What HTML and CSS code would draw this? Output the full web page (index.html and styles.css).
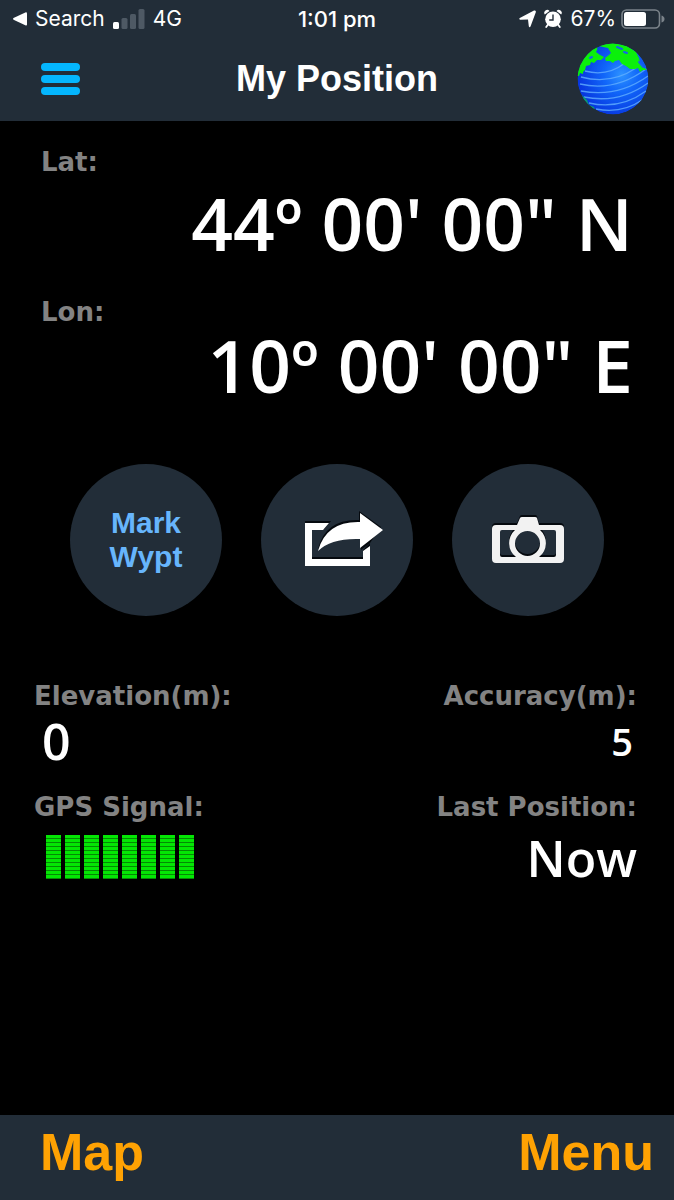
FILE: index.html
```
<!DOCTYPE html>
<html lang="en">
  <head>
    <meta charset="UTF-8">
    <meta name="viewport" content="width=device-width, initial-scale=1">
    <title>My Position</title>
    <link rel="stylesheet" href="styles.css">
  </head>
  <body>

    <header class="top">
      <div class="status">
        <div class="status-left">
          <svg width="14" height="14" viewBox="0 0 14 14" fill="#fff"><path d="M0.5 6.1 12.3 0.4Q14 0 14 1.4V12.4Q14 13.8 12.3 13.2L0.5 7.7Q-0.5 6.9 0.5 6.1Z"/></svg>
          <a href="#" class="back">Search</a>
          <svg width="32" height="20" viewBox="0 0 32 20" fill="#4e5964">
            <rect x="0" y="13" width="6" height="7" rx="1.5" fill="#fff"/>
            <rect x="8.5" y="9" width="6" height="11" rx="1.5"/>
            <rect x="17" y="5" width="6" height="15" rx="1.5"/>
            <rect x="25.5" y="0" width="6" height="20" rx="1.5"/>
          </svg>
          <span>4G</span>
        </div>
        <span class="time">1:01 pm</span>
        <div class="status-right">
          <svg width="17" height="18" viewBox="0 0 17 18" fill="#fff"><path d="M0.8 8 15 0.6Q17.4 0 16.8 2.2L11.6 16.2Q10.6 18.4 9.8 16.2L9 9.6 1.2 9.8Q-0.8 9 0.8 8Z"/></svg>
          <svg width="18" height="18" viewBox="0 0 18 18">
            <path d="M0.8 4.6A3 3 0 0 1 5.5 0.9ZM17.2 4.6A3 3 0 0 0 12.5 0.9Z" fill="#fff"/>
            <path d="M4 14.5 2.2 17M14 14.5l1.8 2.5" stroke="#fff" stroke-width="1.8" stroke-linecap="round"/>
            <circle cx="9" cy="9.2" r="7.8" fill="#fff"/>
            <path d="M9 4.5V10H5.2" fill="none" stroke="#222d38" stroke-width="1.4"/>
          </svg>
          <div class="battery">
            <span>67%</span>
            <svg width="44" height="20" viewBox="0 0 44 20">
              <rect x="1" y="1" width="37.5" height="18" rx="4.5" fill="none" stroke="#7b838a" stroke-width="1.6"/>
              <rect x="3" y="3" width="22" height="14" rx="2.5" fill="#fff"/>
              <path d="M40.5 6.5Q43.5 7.5 43.5 10T40.5 13.5Z" fill="#7b838a"/>
            </svg>
          </div>
        </div>
      </div>

      <div class="title-bar">
        <button class="icon-button" aria-label="Open menu">
          <svg width="39" height="32" viewBox="0 0 39 32" fill="#04b6fe">
            <rect width="39" height="8" rx="4"/>
            <rect y="12" width="39" height="8" rx="4"/>
            <rect y="24" width="39" height="8" rx="4"/>
          </svg>
        </button>
        <h1>My Position</h1>
        <button class="icon-button globe" aria-label="World map">
          <svg width="72" height="72" viewBox="0 0 72 72">
            <defs>
              <radialGradient id="sea" cx="0.62" cy="0.44" r="0.6">
                <stop offset="0" stop-color="#2e93ff"/>
                <stop offset="0.4" stop-color="#1268fa"/>
                <stop offset="1" stop-color="#0838e0"/>
              </radialGradient>
              <clipPath id="ball"><circle cx="36" cy="36" r="35.5"/></clipPath>
            </defs>
            <g clip-path="url(#ball)">
              <circle cx="36" cy="36" r="35.5" fill="url(#sea)"/>
              <g fill="none" stroke="#62b0ff" stroke-width="1.3" opacity="0.8">
                <path d="M8 28Q30 34 48 20"/>
                <path d="M4 34Q34 42 59 25"/>
                <path d="M3 41Q38 49 69 26"/>
                <path d="M4 48Q40 55 71 33"/>
                <path d="M7 54Q42 61 71 40"/>
                <path d="M12 60Q43 67 69 48"/>
                <path d="M19 66Q45 71 65 57"/>
              </g>
              <g fill="#0bf00b">
                <path d="M0 33 0 22 10 6 21 0 20 7 19 9 23 12 27 14 24 17 20 17 17 20 14 19 13 22 9 23 8 27 6 29 6 31 3 30 2 33Z"/>
                <path d="M22 0H36L50 3 59 9 62 15 63 20 66 24 70 27 66 27 63 29 61 25 58 26 53 26 49 23 45 21 42 17 38 18 36 20 33 18 29 18 28 15 32 12 34 10 31 5 26 4 22 3Z"/>
                <path d="M5 52 10 57 12 62 17 64 19 70Q8 65 5 52Z" fill="#0a9c70"/>
              </g>
              <path d="M40 4 45 6M47 9l3 1M62 19l4 5M13 15l2-1" stroke="#1762ee" stroke-width="2" stroke-linecap="round"/>
            </g>
          </svg>
        </button>
      </div>
    </header>

    <main>
      <dl class="coords">
        <dt>Lat:</dt>
        <dd class="lat">44º 00' 00" N</dd>
        <dt>Lon:</dt>
        <dd>10º 00' 00" E</dd>
      </dl>

      <div class="actions">
        <button class="round">Mark<br>Wypt</button>
        <button class="round" aria-label="Share position">
          <svg class="share" width="80" height="56" viewBox="0 0 80 56">
            <path d="M1 9H27L20 17H8V45H59V38L66 31V52H1Z" fill="#05090e"/>
            <path d="M1 11H25L19 18H8V47H59V39L66 34V54H1Z" fill="#fff"/>
            <path d="M14 37Q21 7 55 8V-1L77 15 66 31 57 38V24Q27 22 14 37Z" fill="#05090e"/>
            <path d="M14 39Q22 9 56 10V1L79 18 56 36V27Q27 26 14 39Z" fill="#fff"/>
          </svg>
        </button>
        <button class="round" aria-label="Take photo">
          <svg width="72" height="50" viewBox="0 0 72 50" fill-rule="evenodd">
            <defs>
              <path id="camera" d="M4 10H25L28 3Q28.5 2 30 2H43Q44.5 2 45 3L47 10H68Q72 10 72 14V44Q72 48 68 48H4Q0 48 0 44V14Q0 10 4 10ZM10 15Q8 15 8 17V40Q8 42 10 42H24A17.5 17.5 0 0 1 23 15ZM48 15A17.5 17.5 0 0 1 47 42H62Q64 42 64 40V17Q64 15 62 15ZM23 28.5A12.5 12.5 0 1 0 48 28.5A12.5 12.5 0 1 0 23 28.5Z"/>
            </defs>
            <use href="#camera" y="-2" fill="#05090e"/>
            <use href="#camera" fill="#f2f2f2"/>
          </svg>
        </button>
      </div>

      <dl class="stats">
        <div>
          <dt>Elevation(m):</dt>
          <dd>0</dd>
        </div>
        <div class="right">
          <dt>Accuracy(m):</dt>
          <dd class="small">5</dd>
        </div>
        <div>
          <dt>GPS Signal:</dt>
          <dd class="signal" role="img" aria-label="8 of 8 bars">
            <i></i><i></i><i></i><i></i><i></i><i></i><i></i><i></i>
          </dd>
        </div>
        <div class="right">
          <dt>Last Position:</dt>
          <dd class="now">Now</dd>
        </div>
      </dl>
    </main>

    <footer class="bottom">
      <button>Map</button>
      <button>Menu</button>
    </footer>

  </body>
</html>
```
FILE: styles.css
```
* {
  box-sizing: border-box;
  margin: 0;
  padding: 0;
}

body {
  min-height: 100vh;
  display: flex;
  flex-direction: column;
  background: #000;
  color: #fff;
  font-family: "Liberation Sans", Arial, sans-serif;
}

button {
  border: 0;
  background: none;
  color: inherit;
  font: inherit;
  cursor: pointer;
}

svg {
  display: block;
  overflow: visible;
}

/* header */

.top {
  background: #222d38;
}

.status {
  display: grid;
  grid-template-columns: 1fr auto 1fr;
  align-items: center;
  height: 38px;
  padding: 0 9px;
  font: 21px/38px Inter, sans-serif;
}

.status-left,
.status-right {
  display: flex;
  align-items: center;
  gap: 8px;
}

.status-left { padding-left: 4px }

.status-right { justify-content: flex-end }

.battery {
  display: flex;
  align-items: center;
  gap: 5px;
}

.back {
  color: inherit;
  text-decoration: none;
}

.time {
  font-size: 22px;
  font-weight: 500;
}

.title-bar {
  display: grid;
  grid-template-columns: 1fr auto 1fr;
  align-items: center;
  height: 83px;
  padding: 0 25px 2px;
}

.title-bar h1 {
  font-size: 36px;
  line-height: 44px;
}

.icon-button {
  justify-self: start;
  padding-left: 16px;
}

.globe {
  justify-self: end;
  padding: 0;
}

/* position */

main { flex: 1 }

dt {
  color: #838383;
  font: bold 26px/30px "DejaVu Sans", Verdana, sans-serif;
}

dd {
  font-family: "Open Sans", "Trebuchet MS", sans-serif;
  font-weight: 600;
}

.coords { padding: 26px 41px 0 }

.coords dd {
  font-size: 73px;
  line-height: 76px;
  text-align: right;
}

.coords .lat {
  padding-top: 8px;
  margin-bottom: 36px;
}

.actions {
  display: flex;
  justify-content: center;
  gap: 39px;
  margin: 61px 0 65px;
}

.round {
  display: flex;
  align-items: center;
  justify-content: center;
  width: 152px;
  height: 152px;
  border-radius: 50%;
  background: #222d38;
  color: #67b5fc;
  font-size: 30px;
  font-weight: bold;
  line-height: 34px;
}

.share {
  box-sizing: content-box;
  padding-left: 14px;
}

.stats {
  display: grid;
  grid-template-columns: auto auto;
  justify-content: space-between;
  row-gap: 21px;
  padding: 0 37px 0 34px;
}

.stats dd {
  padding-left: 8px;
  font-size: 50px;
  line-height: 60px;
}

.stats .right { text-align: right }

.stats .small {
  padding-right: 4px;
  font-size: 38px;
}

.stats .now { line-height: 72px }

.stats .signal {
  display: flex;
  gap: 4px;
  padding: 13px 0 0 12px;
}

.signal i {
  width: 15px;
  height: 44px;
  background: repeating-linear-gradient(#04e604 0, #04e604 3px, #048a04 3px, #048a04 4px);
}

/* footer */

.bottom {
  display: flex;
  justify-content: space-between;
  height: 85px;
  padding: 0 20px 12px 40px;
  background: #222d38;
  color: #ffa203;
  font-size: 52px;
  font-weight: bold;
}
```
